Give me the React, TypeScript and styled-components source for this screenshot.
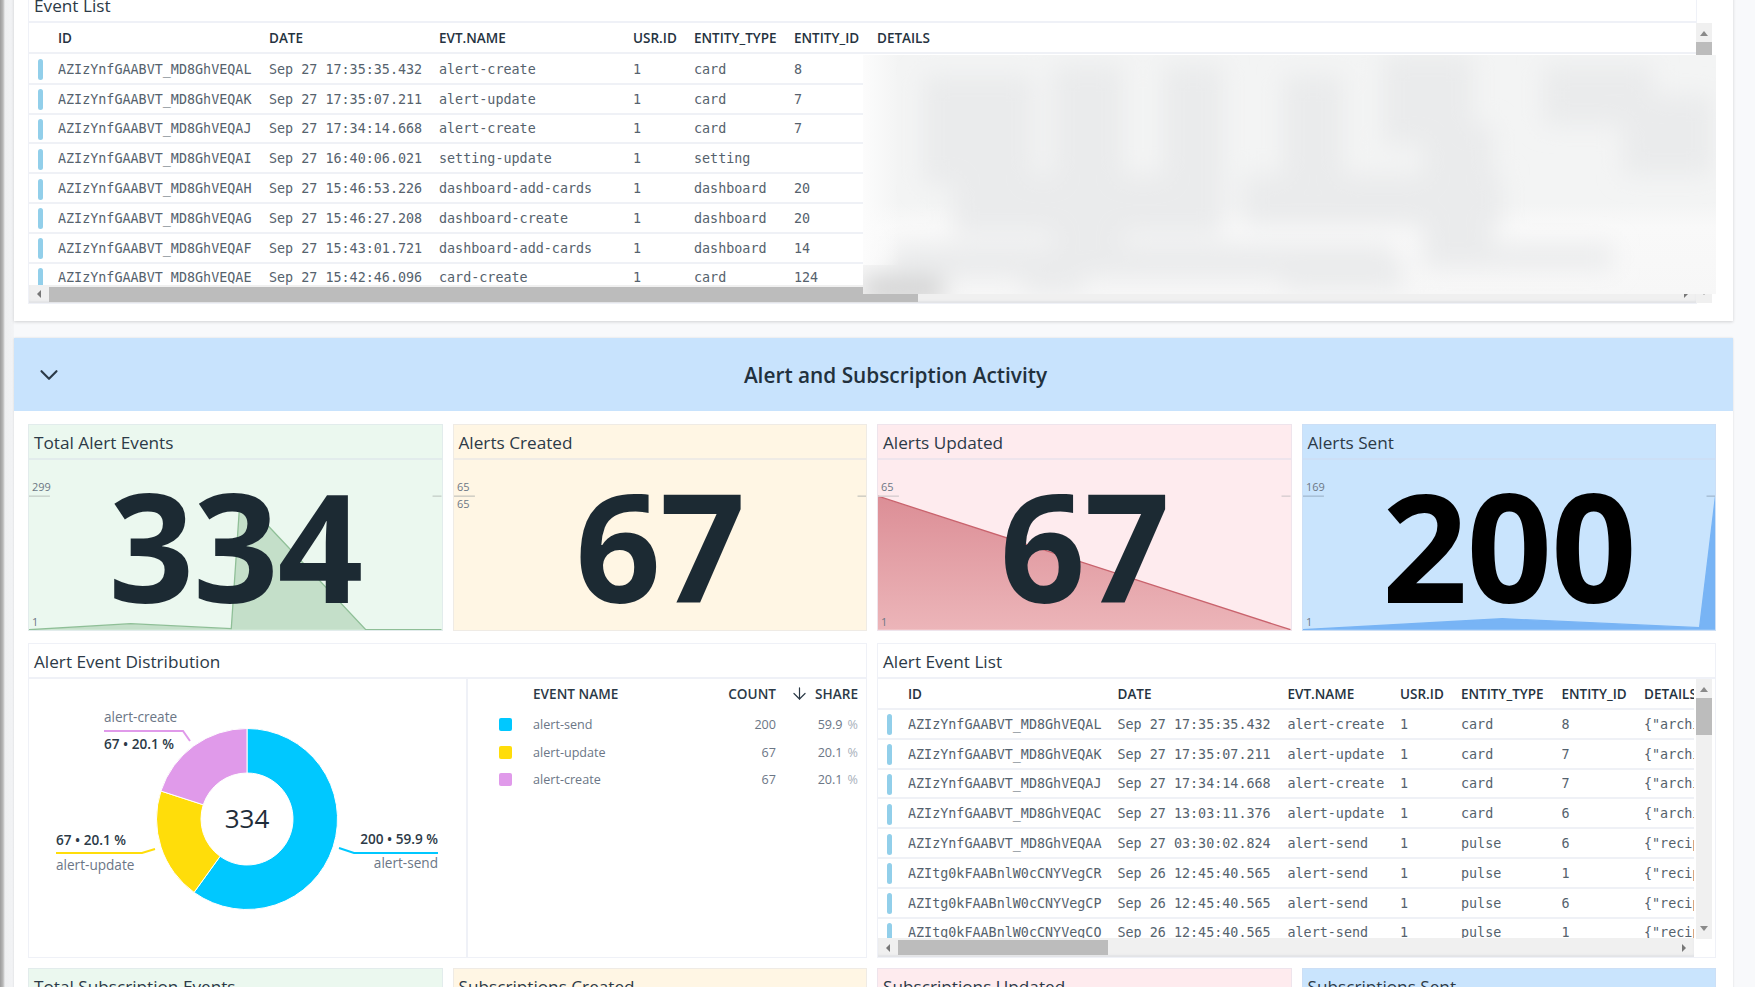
import React from "react";
import styled, { createGlobalStyle } from "styled-components";
import { ChevronDown, ArrowDown } from "lucide-react";

const GlobalStyle = createGlobalStyle`
	html, body {
		margin: 0;
		padding: 0;
		height: 987px;
		overflow: hidden;
		background-color: #f8f9fb;
		font-family: "Open Sans", "Noto Sans", sans-serif;
	}
`;

const TOP_COLS = "29px 211px 170px 194px 61px 100px 83px 1fr";
const ALERT_COLS = "30px 209.5px 170px 112.5px 61px 100.5px 82.5px 1fr";
const LINE = "rgba(210, 214, 232, 0.35)";

const COLUMNS = ["ID", "DATE", "EVT.NAME", "USR.ID", "ENTITY_TYPE", "ENTITY_ID", "DETAILS"];

const TOP_ROWS = [
	["AZIzYnfGAABVT_MD8GhVEQAL", "Sep 27 17:35:35.432", "alert-create", "1", "card", "8"],
	["AZIzYnfGAABVT_MD8GhVEQAK", "Sep 27 17:35:07.211", "alert-update", "1", "card", "7"],
	["AZIzYnfGAABVT_MD8GhVEQAJ", "Sep 27 17:34:14.668", "alert-create", "1", "card", "7"],
	["AZIzYnfGAABVT_MD8GhVEQAI", "Sep 27 16:40:06.021", "setting-update", "1", "setting", ""],
	["AZIzYnfGAABVT_MD8GhVEQAH", "Sep 27 15:46:53.226", "dashboard-add-cards", "1", "dashboard", "20"],
	["AZIzYnfGAABVT_MD8GhVEQAG", "Sep 27 15:46:27.208", "dashboard-create", "1", "dashboard", "20"],
	["AZIzYnfGAABVT_MD8GhVEQAF", "Sep 27 15:43:01.721", "dashboard-add-cards", "1", "dashboard", "14"],
	["AZIzYnfGAABVT_MD8GhVEQAE", "Sep 27 15:42:46.096", "card-create", "1", "card", "124"],
	["AZIzYnfGAABVT_MD8GhVEQAD", "Sep 27 15:40:12.310", "card-create", "1", "card", "123"],
];

const ALERT_ROWS = [
	["AZIzYnfGAABVT_MD8GhVEQAL", "Sep 27 17:35:35.432", "alert-create", "1", "card", "8", '{"archived":false}'],
	["AZIzYnfGAABVT_MD8GhVEQAK", "Sep 27 17:35:07.211", "alert-update", "1", "card", "7", '{"archived":false}'],
	["AZIzYnfGAABVT_MD8GhVEQAJ", "Sep 27 17:34:14.668", "alert-create", "1", "card", "7", '{"archived":false}'],
	["AZIzYnfGAABVT_MD8GhVEQAC", "Sep 27 13:03:11.376", "alert-update", "1", "card", "6", '{"archived":false}'],
	["AZIzYnfGAABVT_MD8GhVEQAA", "Sep 27 03:30:02.824", "alert-send", "1", "pulse", "6", '{"recipients":1}'],
	["AZItg0kFAABnlW0cCNYVegCR", "Sep 26 12:45:40.565", "alert-send", "1", "pulse", "1", '{"recipients":1}'],
	["AZItg0kFAABnlW0cCNYVegCP", "Sep 26 12:45:40.565", "alert-send", "1", "pulse", "6", '{"recipients":1}'],
	["AZItg0kFAABnlW0cCNYVegCO", "Sep 26 12:45:40.565", "alert-send", "1", "pulse", "1", '{"recipients":1}'],
];

const LEGEND = [
	{ name: "alert-send", count: "200", share: "59.9", color: "#00c8ff" },
	{ name: "alert-update", count: "67", share: "20.1", color: "#ffdd0a" },
	{ name: "alert-create", count: "67", share: "20.1", color: "#e09aea" },
];

const BLOTS = [
	[60, 20, 110, 110], [190, 10, 70, 190], [300, 10, 60, 170], [420, 20, 60, 150], [520, 0, 90, 90],
	[560, 70, 70, 130], [680, 10, 110, 60], [760, 40, 90, 80], [90, 120, 230, 60], [380, 120, 260, 50],
	[30, 190, 500, 34], [560, 190, 190, 24], [160, 205, 60, 34], [420, 205, 120, 30], [0, 215, 50, 26],
];

const Page = styled.div`
	display: flex;
	width: 1755px;
	height: 987px;
	overflow: hidden;
	color: #2c3a47;
`;

const Edge = styled.div`
	flex: 0 0 14px;
	background: linear-gradient(90deg, #9b9b9b 0, #b9b9b9 3px, #eeeff1 5px, #f3f4f6 14px);
`;

const Content = styled.div`
	width: 1719px;
	display: flex;
	flex-direction: column;
`;

const TopPanel = styled.div`
	margin-top: -13px;
	padding: 0 36px 17px 14px;
	background-color: #fff;
	box-shadow: 0 1px 3px rgba(0, 0, 0, 0.16);
`;

const Section = styled.section`
	margin-top: 17px;
	background-color: #fff;
	box-shadow: 0 0 2px rgba(0, 0, 0, 0.12);
`;

const SectionHeader = styled.header`
	position: relative;
	height: 73px;
	padding-left: 44px;
	display: flex;
	align-items: center;
	justify-content: center;
	background-color: #c8e3fd;
	font-size: 20.8px;
	font-weight: 600;
	color: #22313d;

	svg {
		position: absolute;
		left: 20px;
		top: 22px;
	}
`;

const SectionBody = styled.div`
	padding: 13px 17px 0 14px;
`;

const Grid = styled.div<{ $gap: number }>`
	display: grid;
	grid-template-columns: repeat(4, 1fr);
	column-gap: 10px;
	margin-bottom: ${(p) => p.$gap}px;
`;

const Card = styled.div<{ $bg?: string; $span?: number }>`
	grid-column: span ${(p) => p.$span ?? 1};
	box-sizing: border-box;
	background-color: ${(p) => p.$bg ?? "#fff"};
	border: 1px solid ${LINE};
	display: flex;
	flex-direction: column;
	min-width: 0;
`;

const CardTitle = styled.div`
	flex: 0 0 35px;
	box-sizing: border-box;
	height: 35px;
	padding: 2px 0 0 5px;
	display: flex;
	align-items: center;
	font-size: 17.2px;
	color: #2c3a47;
	border-bottom: 2px solid ${LINE};
`;

const StatBody = styled.div`
	position: relative;
	height: 170px;
	display: flex;
	align-items: center;
	justify-content: center;
`;

const StatChart = styled.svg`
	position: absolute;
	left: 0;
	top: 0;
	width: 100%;
	height: 100%;
	font-size: 11px;
	fill: #6c7784;
`;

const BigNumber = styled.div<{ $color: string }>`
	position: relative;
	font-size: 150px;
	font-weight: 700;
	line-height: 1;
	letter-spacing: -1.3px;
	color: ${(p) => p.$color};
	margin-top: -1px;
`;

const SplitBody = styled.div`
	display: grid;
	grid-template-columns: 437px 1fr;
	height: 278px;
`;

const DonutSvg = styled.svg`
	display: block;
	width: 437px;
	height: 278px;
	font-size: 13.6px;
`;

const LegendPane = styled.div`
	border-left: 2px solid ${LINE};
	padding-right: 8px;
`;

const LegendRow = styled.div<{ $head?: boolean }>`
	display: grid;
	grid-template-columns: 65px 1fr 60px 82px;
	align-items: center;
	box-sizing: border-box;
	height: ${(p) => (p.$head ? "32px" : "27.4px")};
	padding-bottom: ${(p) => (p.$head ? "3px" : "0")};
	font-size: ${(p) => (p.$head ? "13.6px" : "12.6px")};
	font-weight: ${(p) => (p.$head ? 600 : 400)};
	color: ${(p) => (p.$head ? "#2c3a47" : "#6b7686")};
`;

const Swatch = styled.span<{ $color: string }>`
	width: 13px;
	height: 13px;
	margin-left: 31px;
	border-radius: 2px;
	background-color: ${(p) => p.$color};
`;

const RightCell = styled.div<{ $gap?: number }>`
	display: flex;
	align-items: center;
	justify-content: flex-end;
	gap: ${(p) => p.$gap ?? 5}px;
`;

const PercentSign = styled.span`
	color: #a9b1bc;
`;

const TableArea = styled.div<{ $height: number }>`
	position: relative;
	display: flex;
	height: ${(p) => p.$height}px;
`;

const TableMain = styled.div`
	flex: 1;
	min-width: 0;
	display: flex;
	flex-direction: column;
`;

const TableBody = styled.div<{ $offset: number }>`
	flex: 1;
	overflow: hidden;
	padding-top: ${(p) => p.$offset}px;
`;

const Row = styled.div<{ $cols: string; $head?: boolean }>`
	display: grid;
	grid-template-columns: ${(p) => p.$cols};
	align-items: center;
	box-sizing: border-box;
	height: ${(p) => (p.$head ? "31px" : "29.8px")};
	padding-top: ${(p) => (p.$head ? "0" : "2px")};
	border-bottom: 2px solid #eff1f6;
	white-space: nowrap;
`;

const HeadCell = styled.div`
	font-size: 13.5px;
	font-weight: 600;
	color: #25333f;
	overflow: hidden;
`;

const MonoCell = styled.div`
	font-family: "DejaVu Sans Mono", "Liberation Mono", monospace;
	font-size: 13.4px;
	line-height: 20px;
	color: #55626d;
	overflow: hidden;
`;

const Marker = styled.span`
	width: 5px;
	height: 21px;
	margin-left: 9px;
	border-radius: 3px;
	background-color: #92cfea;
`;

const HScroll = styled.div<{ $height: number }>`
	flex: 0 0 ${(p) => p.$height}px;
	display: flex;
	align-items: center;
	background-color: #f0f0f0;
	box-shadow: inset 0 -2px 2px #e2e3e6;
`;

const ScrollArrow = styled.svg<{ $push?: boolean }>`
	flex: 0 0 20px;
	height: 10px;
	fill: #777;
	margin-left: ${(p) => (p.$push ? "auto" : "0")};
`;

const HThumb = styled.div<{ $width: number }>`
	width: ${(p) => p.$width}px;
	height: 15px;
	background-color: #bcbcbc;
`;

const VScroll = styled.div<{ $floating?: boolean }>`
	box-sizing: border-box;
	width: 16px;
	padding: 6px 0;
	background-color: #f0f0f0;
	display: flex;
	flex-direction: column;
	align-items: center;
	${(p) =>
		p.$floating
			? "position: absolute; top: 0; right: -16px; height: 100%;"
			: "flex: 0 0 16px; margin: 0 3px 0 2px; height: 260px;"}

	svg {
		flex: 0 0 10px;
		width: 12px;
		fill: #8a8a8a;
	}
`;

const VThumb = styled.div<{ $height: number }>`
	flex: 0 0 ${(p) => p.$height}px;
	width: 16px;
	margin-top: 3px;
	margin-bottom: auto;
	background-color: #bcbcbc;
`;

const BlurPatch = styled.svg`
	position: absolute;
	left: 834px;
	top: 32px;
	width: 853px;
	height: 239px;
`;

function DataTable({ cols, rows, offset }: { cols: string; rows: string[][]; offset: number }) {
	return (
		<>
			<Row $cols={cols} $head>
				<span />
				{COLUMNS.map((name) => (
					<HeadCell key={name}>{name}</HeadCell>
				))}
			</Row>
			<TableBody $offset={offset}>
				{rows.map((row) => (
					<Row $cols={cols} key={row[0]}>
						<Marker />
						{row.map((value, i) => (
							<MonoCell key={i}>{value}</MonoCell>
						))}
					</Row>
				))}
			</TableBody>
		</>
	);
}

function HorizontalScroll({ height, thumb }: { height: number; thumb: number }) {
	return (
		<HScroll $height={height}>
			<ScrollArrow viewBox="0 0 20 10">
				<polygon points="8,5 12,1 12,9" />
			</ScrollArrow>
			<HThumb $width={thumb} />
			<ScrollArrow viewBox="0 0 20 10" $push>
				<polygon points="12,5 8,1 8,9" />
			</ScrollArrow>
		</HScroll>
	);
}

function VerticalScroll({ floating, thumb }: { floating?: boolean; thumb: number }) {
	return (
		<VScroll $floating={floating}>
			<svg viewBox="0 0 12 10">
				<polygon points="6,2 10,7 2,7" />
			</svg>
			<VThumb $height={thumb} />
			<svg viewBox="0 0 12 10">
				<polygon points="2,3 10,3 6,8" />
			</svg>
		</VScroll>
	);
}

interface IStat {
	title: string;
	value: string;
	bg: string;
	color: string;
	tick: string;
	topLabels: string[];
	bottomLabel?: string;
	area?: string;
	fill?: string;
	line?: string;
}

const STATS: IStat[] = [
	{
		title: "Total Alert Events",
		value: "334",
		bg: "#ebf8ef",
		color: "#1c2a33",
		tick: "#c9d3cd",
		topLabels: ["299"],
		bottomLabel: "1",
		area: "0,169 102,163 203,168 212,35 338,169 414,169",
		fill: "#c4dfc9",
		line: "#8fbf97",
	},
	{
		title: "Alerts Created",
		value: "67",
		bg: "#fff6e4",
		color: "#1c2a33",
		tick: "#cfcdc4",
		topLabels: ["65", "65"],
	},
	{
		title: "Alerts Updated",
		value: "67",
		bg: "#feebee",
		color: "#1c2a33",
		tick: "#d9cfd2",
		topLabels: ["65"],
		bottomLabel: "1",
		area: "0,35 414,169",
		fill: "url(#redFill)",
		line: "#c9636d",
	},
	{
		title: "Alerts Sent",
		value: "200",
		bg: "#c9e4fd",
		color: "#000",
		tick: "#a7bfd6",
		topLabels: ["169"],
		bottomLabel: "1",
		area: "0,169 200,158 398,167 414,35",
		fill: "#78b4f5",
		line: "#78b4f5",
	},
];

const SUB_TITLES = [
	{ title: "Total Subscription Events", bg: "#ebf8ef" },
	{ title: "Subscriptions Created", bg: "#fff6e4" },
	{ title: "Subscriptions Updated", bg: "#feebee" },
	{ title: "Subscriptions Sent", bg: "#c9e4fd" },
];

function StatCard({ stat }: { stat: IStat }) {
	const closed = stat.area ? `${stat.area} 414,169 0,169` : "";
	return (
		<Card $bg={stat.bg}>
			<CardTitle>{stat.title}</CardTitle>
			<StatBody>
				<StatChart viewBox="0 -1 414 170">
					<defs>
						<linearGradient id="redFill" x1="0" y1="0" x2="0" y2="1">
							<stop offset="0" stopColor="#dc8e96" />
							<stop offset="1" stopColor="#ecb5b9" />
						</linearGradient>
					</defs>
					{stat.area && <polygon points={closed} fill={stat.fill} />}
					{stat.area && (
						<polyline points={stat.area} fill="none" stroke={stat.line} strokeWidth="1.3" />
					)}
					<line x1="0" y1="35" x2="21" y2="35" stroke={stat.tick} strokeWidth="1.5" />
					<line x1="405" y1="35" x2="414" y2="35" stroke={stat.tick} strokeWidth="1.5" />
					<text x="3" y="30">
						{stat.topLabels[0]}
					</text>
					{stat.topLabels[1] && (
						<text x="3" y="47">
							{stat.topLabels[1]}
						</text>
					)}
					{stat.bottomLabel && (
						<text x="3" y="165">
							{stat.bottomLabel}
						</text>
					)}
				</StatChart>
				<BigNumber $color={stat.color}>{stat.value}</BigNumber>
			</StatBody>
		</Card>
	);
}

function polar(angle: number, r: number) {
	const a = (angle * Math.PI) / 180;
	return `${218 + r * Math.sin(a)} ${140 - r * Math.cos(a)}`;
}

function slice(from: number, to: number) {
	const big = to - from > 180 ? 1 : 0;
	return `M${polar(from, 90.5)} A90.5 90.5 0 ${big} 1 ${polar(to, 90.5)} L${polar(to, 46)} A46 46 0 ${big} 0 ${polar(from, 46)} Z`;
}

function Donut() {
	return (
		<DonutSvg viewBox="0 0 437 278">
			<path d={slice(0, 215.8)} fill="#00c8ff" stroke="#fff" strokeWidth="1" />
			<path d={slice(215.8, 288)} fill="#ffdd0a" stroke="#fff" strokeWidth="1" />
			<path d={slice(288, 360)} fill="#e09aea" stroke="#fff" strokeWidth="1" />
			<text x="218" y="149" textAnchor="middle" fontSize="26" fill="#1f2d3a">
				334
			</text>
			<polyline points="75,52 154,52 161,62" fill="none" stroke="#e09aea" strokeWidth="2" />
			<text x="75" y="43" fill="#6b7686">alert-create</text>
			<text x="75" y="70" fontWeight="600" fill="#2c3a47">67 • 20.1 %</text>
			<polyline points="27,174 113,174 126,170" fill="none" stroke="#ffdd0a" strokeWidth="2" />
			<text x="27" y="166" fontWeight="600" fill="#2c3a47">67 • 20.1 %</text>
			<text x="27" y="191" fill="#6b7686">alert-update</text>
			<polyline points="409,174 325,174 310,169" fill="none" stroke="#00c8ff" strokeWidth="2" />
			<text x="409" y="165" textAnchor="end" fontWeight="600" fill="#2c3a47">200 • 59.9 %</text>
			<text x="409" y="189" textAnchor="end" fill="#6b7686">alert-send</text>
		</DonutSvg>
	);
}

function BlurredDetails() {
	return (
		<BlurPatch viewBox="0 0 853 239" preserveAspectRatio="none">
			<defs>
				<filter id="soft" x="-10%" y="-10%" width="120%" height="120%">
					<feGaussianBlur stdDeviation="12" />
				</filter>
				<linearGradient id="patchBase" x1="0" y1="0" x2="0" y2="1">
					<stop offset="0" stopColor="#f3f4f4" />
					<stop offset="0.62" stopColor="#f3f4f4" />
					<stop offset="0.72" stopColor="#f9f9f9" />
					<stop offset="1" stopColor="#f7f7f7" />
				</linearGradient>
				<linearGradient id="patchFade" x1="0" y1="0" x2="1" y2="0">
					<stop offset="0" stopColor="#fcfcfc" />
					<stop offset="1" stopColor="#fcfcfc" stopOpacity="0" />
				</linearGradient>
			</defs>
			<rect width="853" height="239" fill="url(#patchBase)" />
			<g filter="url(#soft)" fill="#eaebec">
				{BLOTS.map(([x, y, w, h]) => (
					<rect key={`${x}-${y}`} x={x} y={y} width={w} height={h} />
				))}
				<rect x="0" y="224" width="80" height="22" fill="#cfcfcf" />
			</g>
			<rect width="36" height="210" fill="url(#patchFade)" />
		</BlurPatch>
	);
}

export default function App() {
	return (
		<>
			<GlobalStyle />
			<Page>
				<Edge />
				<Content>
					<TopPanel>
						<Card>
							<CardTitle>Event List</CardTitle>
							<TableArea $height={280}>
								<TableMain>
									<DataTable cols={TOP_COLS} rows={TOP_ROWS} offset={1} />
									<HorizontalScroll height={18} thumb={869} />
								</TableMain>
								<VerticalScroll floating thumb={40} />
								<BlurredDetails />
							</TableArea>
						</Card>
					</TopPanel>
					<Section>
						<SectionHeader>
							<ChevronDown size={30} strokeWidth={1.7} color="#2c3a47" />
							Alert and Subscription Activity
						</SectionHeader>
						<SectionBody>
							<Grid $gap={12}>
								{STATS.map((stat) => (
									<StatCard key={stat.title} stat={stat} />
								))}
							</Grid>
							<Grid $gap={10}>
								<Card $span={2}>
									<CardTitle>Alert Event Distribution</CardTitle>
									<SplitBody>
										<Donut />
										<LegendPane>
											<LegendRow $head>
												<span />
												<div>EVENT NAME</div>
												<RightCell>COUNT</RightCell>
												<RightCell $gap={6}>
													<ArrowDown size={19} strokeWidth={1.5} color="#2c3a47" />
													SHARE
												</RightCell>
											</LegendRow>
											{LEGEND.map((item) => (
												<LegendRow key={item.name}>
													<Swatch $color={item.color} />
													<div>{item.name}</div>
													<RightCell>{item.count}</RightCell>
													<RightCell>
														{item.share} <PercentSign>%</PercentSign>
													</RightCell>
												</LegendRow>
											))}
										</LegendPane>
									</SplitBody>
								</Card>
								<Card $span={2}>
									<CardTitle>Alert Event List</CardTitle>
									<TableArea $height={278}>
										<TableMain>
											<DataTable cols={ALERT_COLS} rows={ALERT_ROWS} offset={0} />
											<HorizontalScroll height={19} thumb={210} />
										</TableMain>
										<VerticalScroll thumb={37} />
									</TableArea>
								</Card>
							</Grid>
							<Grid $gap={0}>
								{SUB_TITLES.map((item) => (
									<Card $bg={item.bg} key={item.title}>
										<CardTitle>{item.title}</CardTitle>
									</Card>
								))}
							</Grid>
						</SectionBody>
					</Section>
				</Content>
			</Page>
		</>
	);
}
